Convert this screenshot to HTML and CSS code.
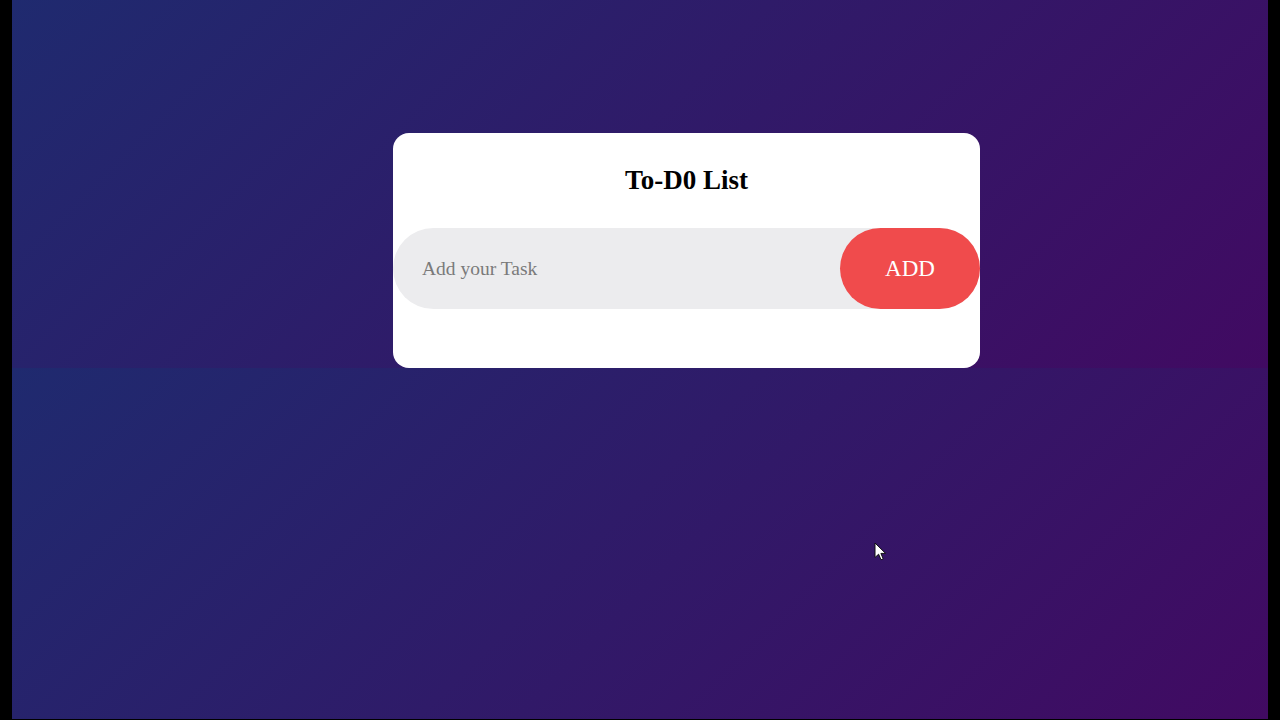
FILE: index.html
```html
<!DOCTYPE html>
<html lang="en">
<head>
<meta charset="utf-8">
<title>To-Do List</title>
<link rel="stylesheet" href="styles.css">
</head>
<body>
<div class="screen">
  <section class="top">
    <div class="todo-app">
      <h2 class="title">To-D0 List</h2>
      <div class="row">
        <input class="task-input" type="text" placeholder="Add your Task">
        <button class="add-btn">ADD</button>
      </div>
    </div>
  </section>
  <section class="bottom"></section>
  <svg class="cursor" width="13" height="20" viewBox="0 0 13 20">
    <path d="M1 1 L1 15.5 L4.6 12.2 L7 17.8 L9.2 16.8 L6.9 11.4 L11.6 11.4 Z" fill="#fff" stroke="#111" stroke-width="1" stroke-linejoin="round"/>
  </svg>
</div>
</body>
</html>
```

FILE: styles.css
```css
html, body {
  margin: 0;
  padding: 0;
  background: #000;
  height: 720px;
  overflow: hidden;
}

.screen {
  position: relative;
  margin: 0 12px;
  height: 719px;
  display: flex;
  flex-direction: column;
}

.top,
.bottom {
  background: linear-gradient(135deg, #1f2a6f, #410a62);
}

.top {
  height: 368px;
  box-sizing: border-box;
  padding: 133px 0 0 381px;
}

.bottom {
  flex: 1;
}

.todo-app {
  width: 587px;
  height: 235px;
  box-sizing: border-box;
  background: #fff;
  border-radius: 16px;
  padding-top: 31px;
}

.title {
  margin: 0;
  text-align: center;
  font-family: "Liberation Serif", "Times New Roman", serif;
  font-weight: bold;
  font-size: 27px;
  line-height: 32px;
  color: #000;
}

.row {
  margin-top: 32px;
  display: flex;
  align-items: center;
  background: #ececee;
  border-radius: 41px;
  height: 81px;
}

.task-input {
  flex: 1;
  border: none;
  outline: none;
  background: transparent;
  padding: 0 0 0 29px;
  font-family: "Liberation Serif", "Times New Roman", serif;
  font-size: 19.5px;
  color: #333;
}

.task-input::placeholder {
  color: #7a7a7a;
}

.add-btn {
  width: 140px;
  height: 81px;
  border: none;
  outline: none;
  border-radius: 41px;
  background: #f04b4c;
  color: #fff;
  font-family: "Liberation Serif", "Times New Roman", serif;
  font-size: 23px;
  padding: 0;
}

.cursor {
  position: absolute;
  left: 862px;
  top: 542px;
}
```
